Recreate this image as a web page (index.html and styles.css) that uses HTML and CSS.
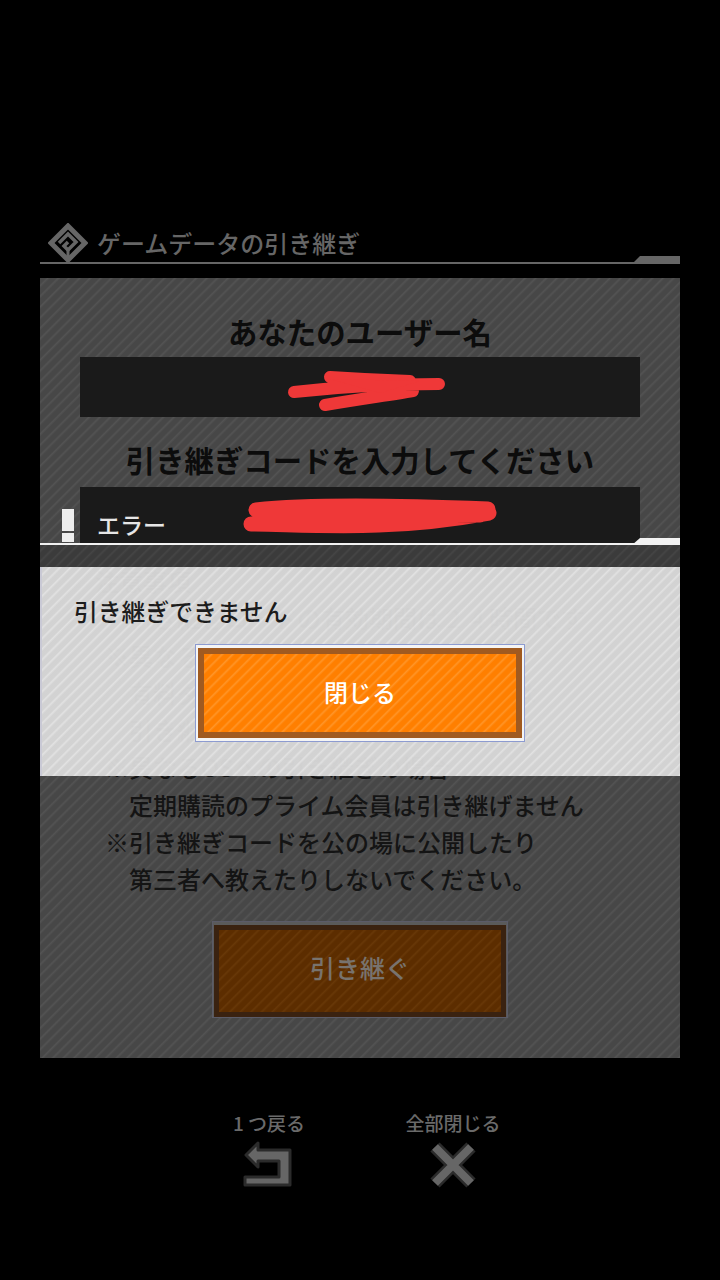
FILE: index.html
```html
<!DOCTYPE html>
<html lang="ja">
<head>
<meta charset="utf-8">
<title>ゲームデータの引き継ぎ</title>
<link rel="stylesheet" href="styles.css">
</head>
<body>
<div class="page">
  <header class="title-row">
    <svg class="logo" viewBox="0 0 40 40" width="40" height="40">
      <path d="M20 3 L37 20 L20 37 L3 20 Z" fill="none" stroke="#666" stroke-width="5"/>
      <path d="M11 20 L20 11 L28 19 L20 27 L16 23 L20 19" fill="none" stroke="#666" stroke-width="3.5"/>
      <path d="M20 27 L20 38" fill="none" stroke="#666" stroke-width="3"/>
    </svg>
    <h1 class="title">ゲームデータの引き継ぎ</h1>
  </header>
  <div class="rule"></div>

  <main class="panel">
    <h2 class="heading">あなたのユーザー名</h2>
    <div class="field field-name">
      <svg class="scribble" viewBox="0 0 560 60" width="560" height="60">
        <path d="M214 35 C260 30 310 27 359 27 M250 20 C280 22 300 23 330 24 M245 48 C280 42 310 38 333 34" fill="none" stroke="#ef3838" stroke-width="12" stroke-linecap="round"/>
        <path d="M250 22 L340 24 L300 36 Z" fill="#ef3838"/>
      </svg>
    </div>
    <h2 class="heading heading-code">引き継ぎコードを入力してください</h2>
    <div class="field field-code">
      <svg class="scribble" viewBox="0 0 560 56" width="560" height="56">
        <path d="M176 23 C230 17 330 19 408 22 M171 37 C240 38 310 44 409 26 M190 30 L400 28" fill="none" stroke="#ef3838" stroke-width="15" stroke-linecap="round"/>
      </svg>
    </div>
    <div class="notes">
      <p class="note note-head">注意事項</p>
      <p class="note">引き継ぎコードの有効期間は２４時間です</p>
      <p class="note mark">※異なる端末への引き継ぎの場合</p>
      <p class="note">有料ダイヤは引き継げますが無料分は</p>
      <p class="note">引き継げません</p>
      <p class="note mark">※異なるOSへの引き継ぎの場合</p>
      <p class="note">定期購読のプライム会員は引き継げません</p>
      <p class="note mark">※引き継ぎコードを公の場に公開したり</p>
      <p class="note">第三者へ教えたりしないでください。</p>
    </div>
    <div class="dim-button"><span>引き継ぐ</span></div>

    <section class="dialog">
      <div class="dialog-head">
        <div class="bang"><i class="bang-bar"></i><i class="bang-dot"></i></div>
        <span class="dialog-title">エラー</span>
      </div>
      <div class="rule rule-white"></div>
      <div class="dialog-gap"></div>
      <div class="dialog-band">
        <p class="message">引き継ぎできません</p>
        <div class="close-button"><span>閉じる</span></div>
      </div>
    </section>
  </main>

  <footer class="footer">
    <div class="nav">
      <span class="nav-label">1 つ戻る</span>
      <svg viewBox="0 0 56 56" width="56" height="56">
        <path d="M5 17 L17 5 L17 12 L49 12 L49 47 L4 47 L4 39 L38 39 L38 23 L17 23 L17 29 Z" fill="#666" stroke="#2b2b2b" stroke-width="3" stroke-linejoin="round"/>
      </svg>
    </div>
    <div class="nav">
      <span class="nav-label">全部閉じる</span>
      <svg viewBox="0 0 56 56" width="56" height="56">
        <path d="M10 9 L46 45 M46 9 L10 45" fill="none" stroke="#2b2b2b" stroke-width="13"/>
        <path d="M10 9 L46 45 M46 9 L10 45" fill="none" stroke="#666" stroke-width="8"/>
      </svg>
    </div>
  </footer>
</div>
</body>
</html>
```

FILE: styles.css
```css
* { box-sizing: border-box; }
html, body { margin: 0; padding: 0; background: #000; }
body { font-family: "Noto Sans CJK JP", "Noto Sans", sans-serif; }
h1, h2, p { margin: 0; font-weight: 500; }
i { display: block; }

.page {
  width: 720px;
  height: 1280px;
  padding: 224px 40px 0;
  overflow: hidden;
}

.title-row {
  display: flex;
  align-items: center;
  height: 38px;
  padding-left: 8px;
  gap: 9px;
}
.title { font-size: 24px; line-height: 38px; color: #666; white-space: nowrap; }
.logo { flex: none; }

.rule {
  position: relative;
  height: 2px;
  background: #666;
}
.rule::after {
  content: "";
  position: absolute;
  right: 0;
  bottom: 0;
  width: 48px;
  height: 8px;
  background: inherit;
  clip-path: polygon(8px 0, 100% 0, 100% 100%, 0 100%);
}

.panel {
  position: relative;
  height: 780px;
  margin-top: 14px;
  padding-top: 33px;
  background: repeating-linear-gradient(135deg, #474747 0 4px, #535353 5.5px, #474747 7.5px);
  color: #0c0c0c;
}

.heading { font-size: 29.4px; line-height: 40px; height: 40px; margin-bottom: 6px; text-align: center; white-space: nowrap; font-weight: 700; }
.heading-code { margin-top: 22px; margin-bottom: 8px; }

.field { position: relative; margin: 0 40px; height: 60px; background: #1a1a1a; }
.field-code { height: 56px; }
.scribble { position: absolute; left: 0; top: 0; }

.notes { margin-top: 19px; padding-left: 89px; }
.note { font-size: 24px; line-height: 37.25px; height: 37.25px; white-space: nowrap; color: #141414; }
.mark { margin-left: -24px; }
.note-head { margin-left: -34px; }

.dim-button {
  width: 296px;
  height: 97px;
  margin: 24px auto 0;
  padding: 3px 1px 0;
  border: 1px solid #5b5b68;
  background: #5a5a5a;
}
.dim-button span {
  display: flex;
  align-items: center;
  justify-content: center;
  width: 100%;
  height: 100%;
  padding-bottom: 8px;
  border: 5px solid #3a2210;
  background: repeating-linear-gradient(135deg, #5c2d00 0 4px, #683808 5.5px, #5c2d00 7.5px);
  font-size: 25px;
  font-weight: 500;
  color: #78736e;
}

.dialog { position: absolute; left: 0; right: 0; top: 227px; }
.dialog-head { display: flex; align-items: center; height: 38px; padding-left: 22px; gap: 23px; }
.bang { display: flex; flex-direction: column; gap: 2px; width: 12px; margin-top: 3px; }
.bang-bar { height: 22px; background: #eee; }
.bang-dot { height: 9px; background: #eee; }
.dialog-title { font-size: 23px; line-height: 38px; color: #e6e6e6; font-weight: 500; }
.rule-white { background: #f2f2f2; }
.rule-white::after { height: 7px; }
.dialog-gap { height: 22px; background: rgba(0, 0, 0, 0.16); }
.dialog-band {
  height: 209px;
  padding-top: 26px;
  border-left: 2px solid rgba(200, 200, 212, 0.96);
  background: repeating-linear-gradient(135deg, rgba(216, 216, 216, 0.96) 0 4px, rgba(232, 232, 232, 0.96) 5.5px, rgba(216, 216, 216, 0.96) 7.5px);
}
.message { font-size: 23.8px; line-height: 36px; padding-left: 32px; color: #1c1c1c; white-space: nowrap; }
.close-button {
  width: 330px;
  height: 98px;
  margin: 15px auto 0;
  padding: 3px 2px;
  border: 1px solid #8d9bd0;
  background: #f4f4f4;
  position: relative;
  left: -1px;
}
.close-button span {
  display: flex;
  align-items: center;
  justify-content: center;
  width: 100%;
  height: 100%;
  padding-bottom: 4px;
  border: 6px solid #a05a20;
  background: repeating-linear-gradient(135deg, #ff7f00 0 4px, #ff9528 5.5px, #ff7f00 7.5px);
  font-size: 24px;
  font-weight: 500;
  color: #fff;
}

.footer { display: flex; justify-content: center; gap: 84px; margin-top: 53px; padding-left: 2px; }
.nav { display: flex; flex-direction: column; align-items: center; width: 100px; gap: 3px; }
.nav-label { font-size: 19px; line-height: 24px; color: #6a6a6a; white-space: nowrap; font-weight: 500; }
```
